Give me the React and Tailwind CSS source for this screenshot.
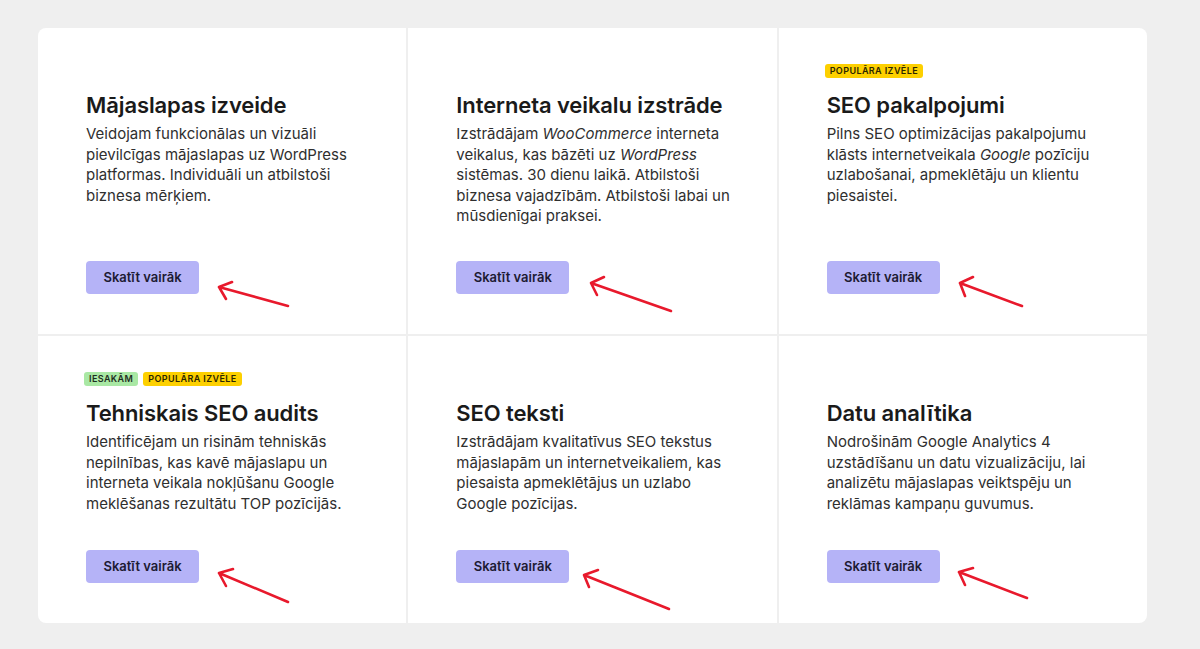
import React from 'react';

const services = [
  {
    title: 'Mājaslapas izveide',
    body: <>Veidojam funkcionālas un vizuāli pievilcīgas mājaslapas uz WordPress platformas. Individuāli un atbilstoši biznesa mērķiem.</>,
    badges: [],
    arrow: { tip: [181, 259], up: [194, 254], low: [188, 271], tail: [250, 278] },
  },
  {
    title: 'Interneta veikalu izstrāde',
    body: <>Izstrādājam <em>WooCommerce</em> interneta veikalus, kas bāzēti uz <em>WordPress</em> sistēmas. 30 dienu laikā. Atbilstoši biznesa vajadzībām. Atbilstoši labai un mūsdienīgai praksei.</>,
    badges: [],
    wide: true,
    arrow: { tip: [183, 255], up: [196, 249], low: [189, 267], tail: [263, 283] },
  },
  {
    title: 'SEO pakalpojumi',
    body: <>Pilns SEO optimizācijas pakalpojumu klāsts internetveikala <em>Google</em> pozīciju uzlabošanai, apmeklētāju un klientu piesaistei.</>,
    badges: ['popular'],
    arrow: { tip: [181, 255], up: [194, 249], low: [186, 268], tail: [243, 278] },
  },
  {
    title: 'Tehniskais SEO audits',
    body: <>Identificējam un risinām tehniskās nepilnības, kas kavē mājaslapu un interneta veikala nokļūšanu Google meklēšanas rezultātu TOP pozīcijās.</>,
    badges: ['recommended', 'popular'],
    arrow: { tip: [181, 237], up: [195, 233], low: [188, 250], tail: [250, 266] },
  },
  {
    title: 'SEO teksti',
    body: <>Izstrādājam kvalitatīvus SEO tekstus mājaslapām un internetveikaliem, kas piesaista apmeklētājus un uzlabo Google pozīcijas.</>,
    badges: [],
    arrow: { tip: [176, 239], up: [190, 234], low: [181, 251], tail: [261, 273] },
  },
  {
    title: 'Datu analītika',
    body: <>Nodrošinām Google Analytics 4 uzstādīšanu un datu vizualizāciju, lai analizētu mājaslapas veiktspēju un reklāmas kampaņu guvumus.</>,
    badges: [],
    arrow: { tip: [180, 236], up: [194, 232], low: [186, 249], tail: [248, 262] },
  },
];

function Badge({ kind }) {
  if (kind === 'recommended') {
    return (
      <span className="h-[14px] px-[5px] rounded-[3px] bg-[#a9e8a4] text-[#1f2d1f] text-[9px] font-semibold tracking-[0.4px] leading-[14px]">
        IESAKĀM
      </span>
    );
  }
  return (
    <span className="h-[14px] px-[5px] rounded-[3px] bg-[#fdd000] text-[#2b2500] text-[9px] font-semibold tracking-[0.4px] leading-[14px]">
      POPULĀRA IZVĒLE
    </span>
  );
}

function Arrow({ a }) {
  const p = (pt) => `${pt[0]} ${pt[1]}`;
  return (
    <svg className="absolute inset-0 w-full h-full pointer-events-none" fill="none">
      <path
        d={`M${p(a.tail)} L${p(a.tip)} M${p(a.up)} L${p(a.tip)} L${p(a.low)}`}
        stroke="#e8192c"
        strokeWidth="2.6"
        strokeLinecap="round"
        strokeLinejoin="round"
      />
    </svg>
  );
}

function ServiceCell({ s }) {
  return (
    <div className="relative bg-white flex flex-col px-12 pt-9 pb-10">
      <div className="h-[14px] flex gap-[5px] -ml-[2px]">
        {s.badges.map((b, i) => <Badge key={i} kind={b} />)}
      </div>
      <h3 className="mt-[14px] text-[22px] leading-[27px] font-semibold text-[#1a1a1a] tracking-[-0.1px]">{s.title}</h3>
      <p className={s.wide ? 'mt-[5px] -mr-[14px] text-[15px] leading-[20.5px] text-[#2f2f2f]' : 'mt-[5px] text-[15px] leading-[20.5px] text-[#2f2f2f]'}>
        {s.body}
      </p>
      <div className="mt-auto pt-[30px]">
        <button className="w-[113px] h-[33px] rounded-[4px] bg-[#b5b3f7] text-[13px] font-semibold text-[#1d1b33]">
          Skatīt vairāk
        </button>
      </div>
      <Arrow a={s.arrow} />
    </div>
  );
}

export default function App() {
  return (
    <div className="min-h-[649px] bg-[#efefef] pt-[28px] px-[38px] pb-[26px]" style={{ fontFamily: 'Inter, "Noto Sans", sans-serif' }}>
      <div className="w-[1109px] grid grid-cols-3 grid-rows-[306px_287px] gap-[2px] rounded-lg overflow-hidden">
        {services.map((s) => <ServiceCell key={s.title} s={s} />)}
      </div>
    </div>
  );
}
